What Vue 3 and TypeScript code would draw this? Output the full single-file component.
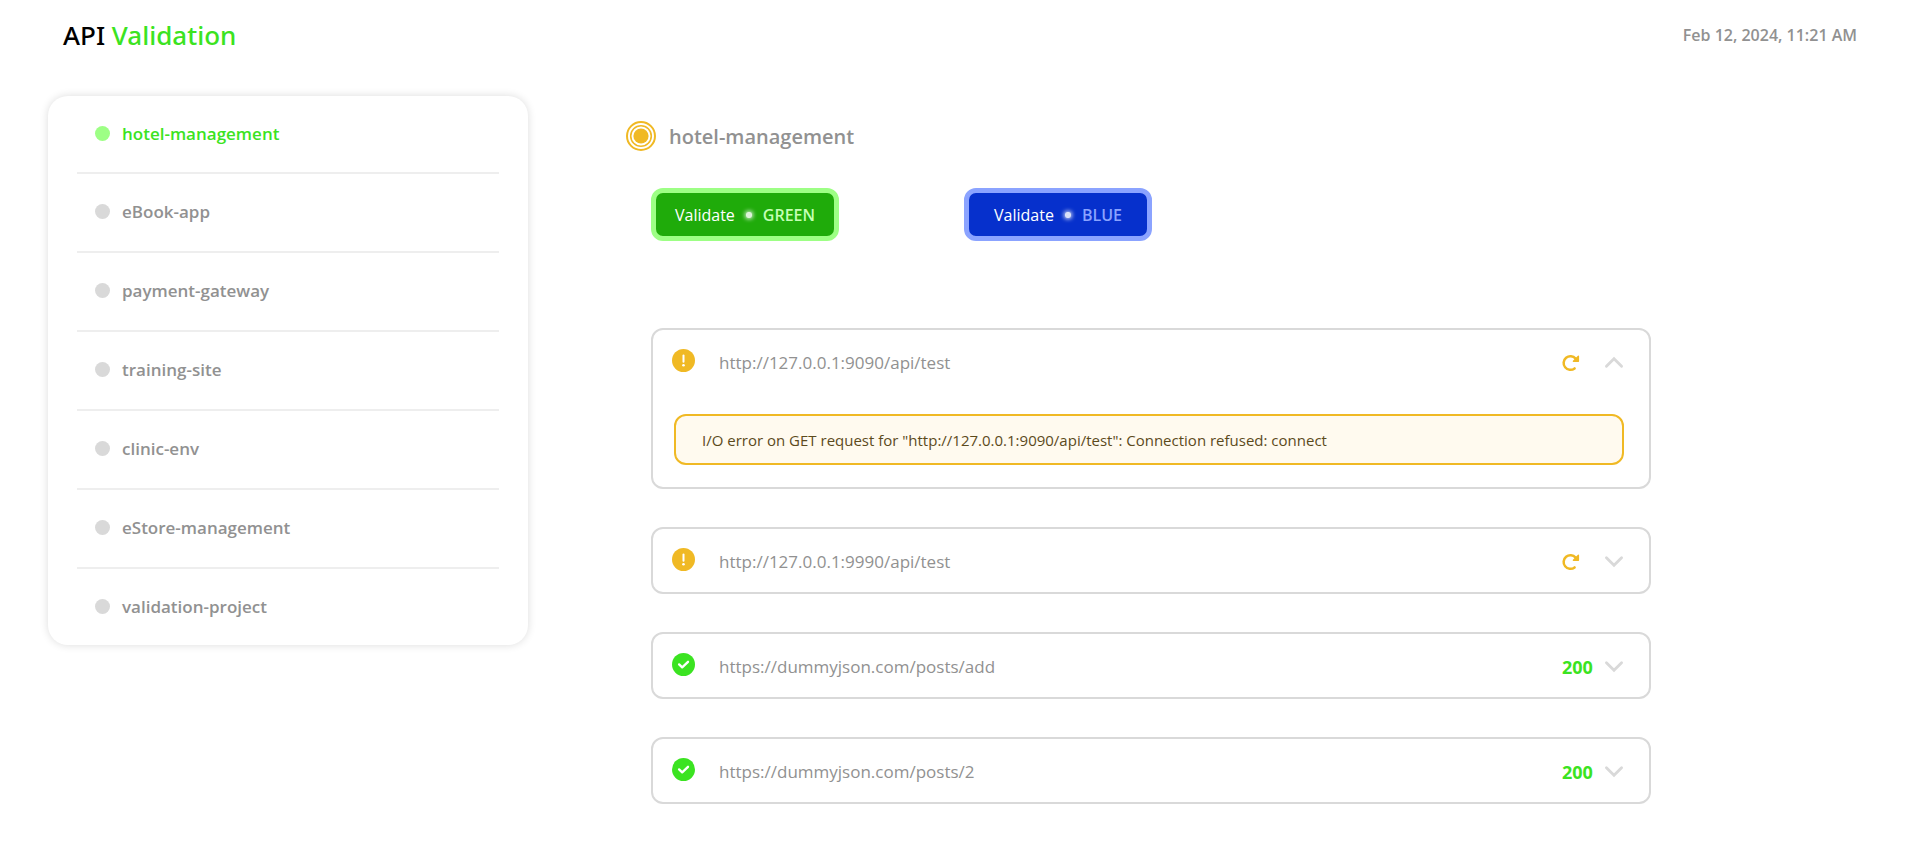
<script setup lang="ts">
import { ref } from 'vue'

interface Endpoint {
  url: string
  status: 'warning' | 'success'
  code?: number
  message: string
  open: boolean
}

const projects: string[] = [
  'hotel-management',
  'eBook-app',
  'payment-gateway',
  'training-site',
  'clinic-env',
  'eStore-management',
  'validation-project',
]

const selected = ref<string>('hotel-management')

const endpoints = ref<Endpoint[]>([
  {
    url: 'http://127.0.0.1:9090/api/test',
    status: 'warning',
    message: 'I/O error on GET request for "http://127.0.0.1:9090/api/test": Connection refused: connect',
    open: true,
  },
  {
    url: 'http://127.0.0.1:9990/api/test',
    status: 'warning',
    message: 'I/O error on GET request for "http://127.0.0.1:9990/api/test": Connection refused: connect',
    open: false,
  },
  { url: 'https://dummyjson.com/posts/add', status: 'success', code: 200, message: 'OK', open: false },
  { url: 'https://dummyjson.com/posts/2', status: 'success', code: 200, message: 'OK', open: false },
])
</script>

<template>
  <div class="page">
    <header class="topbar">
      <h1 class="title">API <span class="accent">Validation</span></h1>
      <time class="date" datetime="2024-02-12T11:21">Feb 12, 2024, 11:21 AM</time>
    </header>

    <div class="layout">
      <nav class="sidebar" aria-label="Projects">
        <ul class="projects">
          <li v-for="name in projects" :key="name" class="project">
            <button
              type="button"
              class="project-button"
              :class="{ active: name === selected }"
              @click="selected = name"
            >
              <span class="dot"></span>{{ name }}
            </button>
          </li>
        </ul>
      </nav>

      <main class="content">
        <h2 class="heading">
          <svg class="heading-icon" viewBox="0 0 30 30" aria-hidden="true">
            <circle cx="15" cy="15" r="14" fill="none" stroke="#f0b924" stroke-width="2" />
            <circle cx="15" cy="15" r="10.3" fill="none" stroke="#f0b924" stroke-width="1.6" />
            <circle cx="15" cy="15" r="7.6" fill="#f0b924" />
          </svg>
          {{ selected }}
        </h2>

        <div class="panel">
          <div class="actions">
            <button type="button" class="validate green">
              Validate <span class="glow"></span> <b class="env">GREEN</b>
            </button>
            <button type="button" class="validate blue">
              Validate <span class="glow"></span> <b class="env">BLUE</b>
            </button>
          </div>

          <section class="endpoints">
            <article v-for="item in endpoints" :key="item.url" class="endpoint">
              <div class="row">
                <svg class="status" viewBox="0 0 23 23" aria-hidden="true">
                  <template v-if="item.status === 'warning'">
                    <circle cx="11.5" cy="11.5" r="11.5" fill="#f0b924" />
                    <path d="M11.5 6.5v6.2" stroke="#fff" stroke-width="2" stroke-linecap="round" />
                    <circle cx="11.5" cy="16.3" r="1.3" fill="#fff" />
                  </template>
                  <template v-else>
                    <circle cx="11.5" cy="11.5" r="11.5" fill="#3be321" />
                    <path
                      d="M7.1 11.4l3.1 3 5.8-5.6"
                      fill="none"
                      stroke="#fff"
                      stroke-width="2.3"
                      stroke-linecap="round"
                      stroke-linejoin="round"
                    />
                  </template>
                </svg>
                <span class="url">{{ item.url }}</span>
                <span v-if="item.code" class="code">{{ item.code }}</span>
                <button v-else type="button" class="icon-button retry" aria-label="Retry">
                  <svg class="retry-icon" viewBox="0 0 18 18" aria-hidden="true">
                    <path
                      d="M12.6 14.4A6.8 6.8 0 1 1 13.6 4.6"
                      fill="none"
                      stroke="#f0b924"
                      stroke-width="2.5"
                      stroke-linecap="round"
                    />
                    <path
                      d="M16.4 2.2v5h-5z"
                      fill="#f0b924"
                      stroke="#f0b924"
                      stroke-width="1.4"
                      stroke-linejoin="round"
                    />
                  </svg>
                </button>
                <button
                  type="button"
                  class="icon-button"
                  :aria-label="item.open ? 'Collapse' : 'Expand'"
                  :aria-expanded="item.open"
                  @click="item.open = !item.open"
                >
                  <svg class="chevron" viewBox="0 0 18 12" aria-hidden="true">
                    <path
                      :d="item.open ? 'M2 9.5L9 2.5l7 7' : 'M2 2.5L9 9.5l7-7'"
                      fill="none"
                      stroke="#d9d9d9"
                      stroke-width="2.6"
                      stroke-linecap="round"
                    />
                  </svg>
                </button>
              </div>
              <p v-if="item.open" class="message">{{ item.message }}</p>
            </article>
          </section>
        </div>
      </main>
    </div>
  </div>
</template>

<style>
body {
  background: #fff;
}
</style>

<style scoped>
.page {
  box-sizing: border-box;
  padding: 0 48px 40px;
  font-family: "Open Sans", "Noto Sans", sans-serif;
  color: #919191;
}

button {
  padding: 0;
  border: 0;
  background: none;
  font: inherit;
  color: inherit;
  cursor: pointer;
}

.topbar {
  display: flex;
  align-items: center;
  justify-content: space-between;
  height: 70px;
  padding: 0 15px;
}

.title {
  margin: 0;
  font-family: "Noto Sans", "Open Sans", sans-serif;
  font-size: 26px;
  font-weight: 500;
  color: #000;
}

.accent {
  color: #3be321;
}

.date {
  font-size: 16px;
  font-weight: 600;
}

.layout {
  display: flex;
  align-items: flex-start;
  gap: 98px;
  margin-top: 26px;
}

.sidebar {
  box-sizing: border-box;
  flex: 0 0 480px;
  padding: 0 29px;
  border-radius: 20px;
  box-shadow: 0 0 8px rgba(0, 0, 0, 0.14);
}

.projects {
  margin: 0;
  padding: 0;
  list-style: none;
}

.project {
  height: 77px;
}

.project:first-child,
.project:last-child {
  height: 76px;
}

.project + .project {
  border-top: 2px solid #eee;
}

.project-button {
  display: flex;
  align-items: center;
  gap: 12px;
  width: 100%;
  height: 100%;
  padding: 0 18px 2px;
  font-size: 17px;
  font-weight: 600;
}

.dot {
  width: 15px;
  height: 15px;
  border-radius: 50%;
  background: #d9d9d9;
}

.project-button.active {
  color: #3be321;
}

.active .dot {
  background: #9dff85;
}

.content {
  flex: 1;
  min-width: 0;
}

.heading {
  display: flex;
  align-items: center;
  gap: 13px;
  height: 30px;
  margin: 25px 0 37px;
  font-size: 20px;
  font-weight: 600;
}

.heading-icon {
  width: 30px;
  height: 30px;
}

.panel {
  max-width: 1000px;
  margin-left: 25px;
}

.actions {
  display: flex;
  gap: 125px;
}

.validate {
  box-sizing: border-box;
  display: flex;
  align-items: center;
  justify-content: center;
  gap: 11px;
  width: 188px;
  height: 53px;
  border: 5px solid;
  border-radius: 12px;
  font-size: 16px;
  color: #fff;
}

.green {
  border-color: #9dff85;
  background: #1fab0a;
}

.blue {
  border-color: #8ba3ff;
  background: #0630cc;
}

.env {
  font-weight: 600;
}

.green .env {
  color: #c4ffb5;
}

.blue .env {
  color: #8ba3ff;
}

.glow {
  width: 6px;
  height: 6px;
  border-radius: 2px;
  background: rgba(255, 255, 255, 0.85);
  box-shadow: 0 0 4px 1px rgba(255, 255, 255, 0.8);
}

.endpoints {
  display: grid;
  gap: 38px;
  margin-top: 87px;
}

.endpoint {
  padding: 0 25px 0 19px;
  border: 2px solid #d9d9d9;
  border-radius: 12px;
}

.row {
  box-sizing: border-box;
  display: flex;
  align-items: center;
  height: 63px;
  padding-top: 2px;
}

.status {
  width: 23px;
  height: 23px;
  margin-bottom: 4px;
}

.url {
  flex: 1;
  margin-left: 24px;
  font-size: 17px;
}

.code {
  width: 42px;
  font-size: 18px;
  font-weight: 700;
  color: #3be321;
}

.icon-button {
  display: flex;
}

.retry {
  width: 42px;
}

.retry-icon {
  width: 18px;
  height: 18px;
}

.chevron {
  width: 20px;
  height: 13px;
}

.message {
  margin: 21px 0 22px 2px;
  padding: 13px 26px 11px;
  border: 2px solid #f0b924;
  border-radius: 12px;
  background: #fffaef;
  font-size: 15px;
  line-height: 23px;
  color: #5c4a1c;
}
</style>
